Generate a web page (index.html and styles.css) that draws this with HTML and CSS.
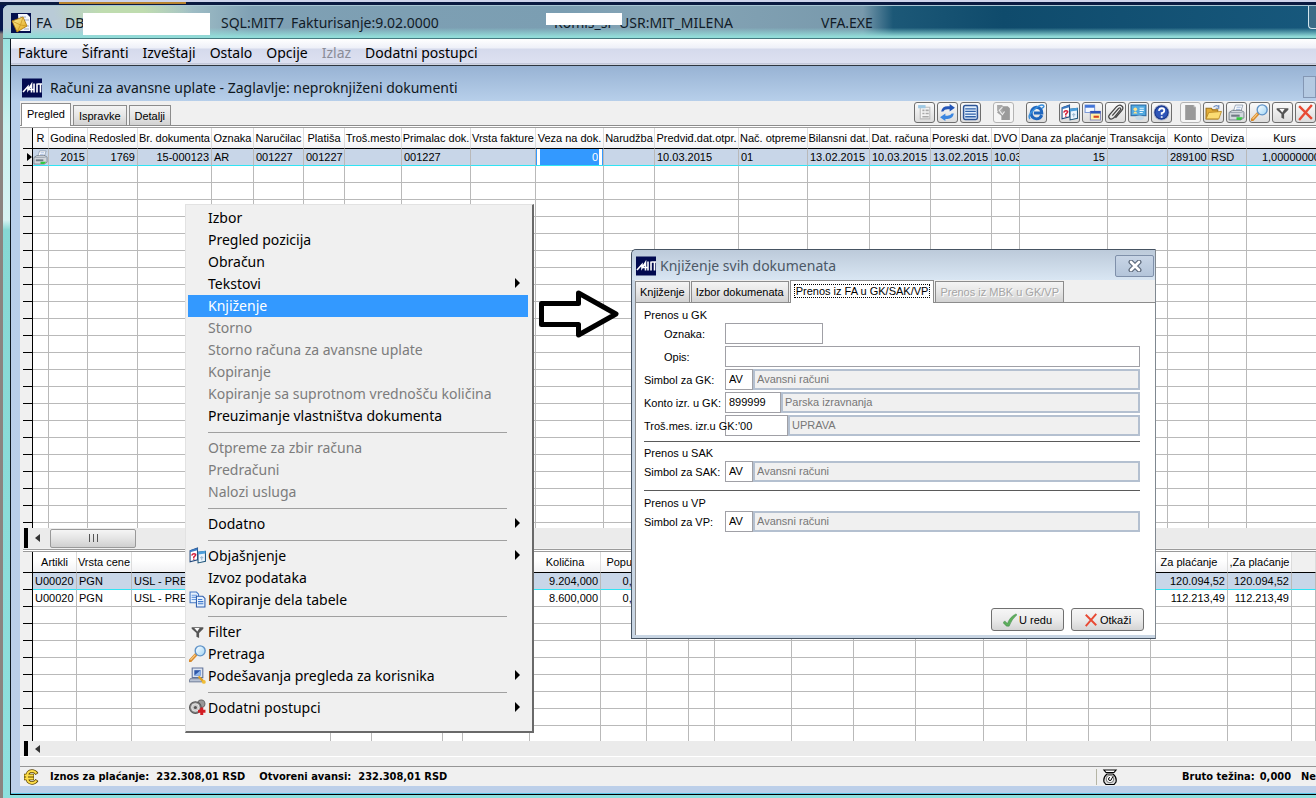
FILE: index.html
```html
<!DOCTYPE html>
<html lang="sr-Latn">
<head>
<meta charset="utf-8">
<title>Fakturisanje</title>
<link rel="stylesheet" href="styles.css">
</head>
<body>
<svg class="defs" aria-hidden="true">
  <defs>
    <linearGradient id="gold" x1="0" y1="0" x2="1" y2="1"><stop offset="0" stop-color="#fff3a0"/><stop offset="1" stop-color="#e0a010"/></linearGradient>
    <linearGradient id="glass" x1="0" y1="0" x2="1" y2="1"><stop offset="0" stop-color="#fff"/><stop offset="1" stop-color="#9fd4f5"/></linearGradient>
    <symbol id="i-mit" viewBox="0 0 20 19"><rect width="20" height="19" fill="#020a50"/><path d="M1 13.500 6 8v3.500L9.500 6v8M6 11h6M12 5v9M15 5v9M15.500 5.500H20M18.500 5.500V14" fill="none" stroke="#fff" stroke-width="1.600"/></symbol>
    <symbol id="i-app" viewBox="0 0 20 20"><rect width="20" height="20" fill="#04104e"/><path d="M7 1h9l3 3v14H8z" fill="#f4f6fb"/><path d="M9 4h6M10 7h8M15 13h3M13 16h5" stroke="#9aa7c4"/><path d="M1 8 12 4l4 9-10 6z" fill="url(#gold)" stroke="#a87408" stroke-width=".8"/><path d="m1 8 8.500 4L12 4M6 19l3.500-7 6.500 1" fill="none" stroke="#c99722" stroke-width=".8"/></symbol>
    <symbol id="i-print" viewBox="0 0 16 16"><path d="M5 7 7 1h7l-2 6z" fill="#fff" stroke="#7b8ca2" stroke-width=".7"/><path d="M8 3h4M7.500 5h4" stroke="#8aa6d6" stroke-width=".8"/><path d="m1 8 3-2h9l2 2v5l-3 2H1z" fill="#d3d8de" stroke="#5f6a76" stroke-width=".7"/><path d="M1 8h11l3-1" fill="none" stroke="#8b96a2" stroke-width=".7"/><path d="M3 10h8v2H3z" fill="#707a84"/><path d="M8 12.500h6L12 15H8z" fill="#35c840"/></symbol>
    <symbol id="i-lens" viewBox="0 0 16 16"><path d="m1 15 5.500-6" stroke="#d98a2b" stroke-width="3" stroke-linecap="round"/><path d="m1.500 14 4.500-5" stroke="#f9cf8a"/><circle cx="10.500" cy="5.500" r="4.700" fill="url(#glass)" stroke="#5f93c8" stroke-width="1.300"/></symbol>
    <symbol id="i-filter" viewBox="0 0 16 16"><path d="M2.500 4h11v1.500L9.500 9.500V14l-2.500-1V9.500L2.500 5.500z" fill="#555"/><path d="M5 4.800h5L7.800 8z" fill="#fafafa"/></symbol>
    <symbol id="i-help-docs" viewBox="0 0 16 16"><path d="M1 3.500 8 1v11l-7 2z" fill="#fff" stroke="#22487c"/><path d="M1 3 8 1v2L1 5z" fill="#3d7cc4"/><path d="m8.500 5 7-1v9.500l-7 1.500z" fill="#eaf5fd" stroke="#22587c"/><path d="m8.500 4.500 7-1v2.500l-7 1z" fill="#4c9fdc"/><path d="M2.500 8q1-2 3-1.500t-1 3v1M4.500 11v1" fill="none" stroke="#d21d3a" stroke-width="1.400"/><path d="M10.500 10h3M12 8.500v4" stroke="#9fbdd6"/></symbol>
    <symbol id="i-copy" viewBox="0 0 16 16"><path d="M1 1h6l2 2v8H1z" fill="#e6f1fd" stroke="#4377c4"/><path d="M2.500 4h5M2.500 6h5M2.500 8h5" stroke="#6b9be0"/><path d="M7 5h6l2 2v8H7z" fill="#e6f1fd" stroke="#315fae"/><path d="M8.500 8h4M8.500 10h5M8.500 12h5" stroke="#3f78cc"/></symbol>
    <symbol id="i-pc" viewBox="0 0 16 16"><path d="M3 1h10v9H3z" fill="#dce5f2" stroke="#617399"/><path d="M5 3h6v5H5z" fill="#2e57a8"/><path d="m5 8 6-5v5z" fill="#8fb6ec"/><path d="M1 11h11l1 3H0z" fill="#b9c3d4" stroke="#65738e" stroke-width=".8"/><path d="m9 9 5 5" stroke="#e0a020" stroke-width="2"/><circle cx="14" cy="14" r="1.800" fill="#f0bd37"/></symbol>
    <symbol id="i-gears" viewBox="0 0 16 16"><circle cx="11.500" cy="4.500" r="3.500" fill="#999" stroke="#666"/><circle cx="6" cy="8" r="5.500" fill="#8d8d8d" stroke="#555"/><circle cx="6" cy="8" r="3.600" fill="#c9c9c9" stroke="#eee" stroke-width=".8"/><circle cx="6" cy="8" r="1.500" fill="#555"/><path d="M12 8v7M8.500 11.500h7" stroke="#d31e24" stroke-width="2.800"/></symbol>
    <symbol id="i-form" viewBox="0 0 16 16"><path d="M4 3h9v11H4z" fill="#f4f4f4" stroke="#bbb"/><path d="M2 1h7v3H2z" fill="#9fc9e4"/><path d="M6 6h2M9 6h3M6 9h2M9 9h3M6 12h6" stroke="#aaa" stroke-width="1.500"/></symbol>
    <symbol id="i-refresh" viewBox="0 0 16 16"><path d="M2 7q1-5 6-5h2V0l5 3.500L10 7V5H8Q5 5 4 7z" fill="#2456b8"/><path d="M14 9q-1 5-6 5H6v2l-5-3.500L6 9v2h2q3 0 4-2z" fill="#3b86e0"/></symbol>
    <symbol id="i-list" viewBox="0 0 16 16"><rect x="1.500" y="1.500" width="13" height="13" rx="1.500" fill="#e2effc" stroke="#2d5596" stroke-width="1.400"/><path d="M3 4.500h10M3 7h10M3 9.500h10M3 12h10" stroke="#2f61a8" stroke-width="1.200"/></symbol>
    <symbol id="i-gray-doc" viewBox="0 0 16 16"><path d="M6 2h6l2 2v11H6V11L2 8z" fill="#9a9a9a"/><path d="M2 1h5v5l2 2-4 2-3-4z" fill="#a9a9a9"/><path d="m7 3-3 3 3 4 2-3" fill="none" stroke="#eee"/></symbol>
    <symbol id="i-ie" viewBox="0 0 16 16"><path d="M13 10.500Q11.500 14 8 14 3 13.500 3 8.500 3.500 3.500 8 3q5 .5 5 5.500H5.500" fill="none" stroke="#1f66be" stroke-width="2.800"/><path d="M2 14Q-1 11 6 5t9-3q0 1-2 2" fill="none" stroke="#3c91de" stroke-width="1.400"/></symbol>
    <symbol id="i-windows" viewBox="0 0 16 16"><path d="M1 1h9v7H1z" fill="#f3f8ff" stroke="#7d9bd8"/><path d="M1 1h9v2.500H1z" fill="#3f73d8"/><path d="M6 7h9.500v8H6z" fill="#fff1a8" stroke="#8a8dbb"/><path d="M6 6.500h9.500V9H6z" fill="#2c51b8"/><path d="M9 11h5v2H9z" fill="#d8421c"/></symbol>
    <symbol id="i-clip" viewBox="0 0 16 16"><path d="m5 11 6-7q2-1 2 1l-6.500 8q-3 2.500-4.500 0-1-1 .5-3L9 2.500q3-2.500 5-.5 2 1.500 0 4L8 13" fill="none" stroke="#444" stroke-width="1.200"/></symbol>
    <symbol id="i-card" viewBox="0 0 16 16"><rect x="1" y="1" width="14" height="10" fill="#50a9e0" stroke="#2869a4"/><circle cx="5" cy="5" r="1.700" fill="#ffe38a"/><path d="M3 9q2-4 4 0z" fill="#ffe38a"/><path d="M9 4h4M9 6h4M9 8h3" stroke="#e8f6ff"/><ellipse cx="9" cy="13" rx="4" ry="2.200" fill="#c4d9e8"/></symbol>
    <symbol id="i-question" viewBox="0 0 16 16"><circle cx="8" cy="8" r="7" fill="#2e55b8" stroke="#aab4cc"/><circle cx="8" cy="8" r="6.200" fill="none" stroke="#1a3688"/><path d="M5.500 6.500Q6 4 8.300 4t2.300 2T8.200 8.500V10M8.200 11.500V13" fill="none" stroke="#fff" stroke-width="1.700"/></symbol>
    <symbol id="i-blank" viewBox="0 0 16 16"><path d="M3 1h8l2 2v12H3z" fill="#999"/><path d="m11 1 2 2h-2z" fill="#ccc"/></symbol>
    <symbol id="i-folder" viewBox="0 0 16 16"><path d="M1 4h5l1 1.500h5V14H1z" fill="#e3ac37" stroke="#9d721b"/><path d="m3.500 8 12-1-2.500 7H1z" fill="#fbdc72" stroke="#b78622" stroke-width=".8"/><path d="M8 3q3-3 5 0m0-2v3h-3" fill="none" stroke="#6b8cc0"/></symbol>
    <symbol id="i-x" viewBox="0 0 16 16"><path d="m2 2 12 12M14 1 2 15" fill="none" stroke="#e84a34" stroke-width="2.200"/></symbol>
    <symbol id="i-check" viewBox="0 0 16 16"><path d="m0 11 2-2 3 3Q8 4 15 1l1 1Q10 7 7 15H4z" fill="#5dae5c" stroke="#2d7d36" stroke-width=".5"/></symbol>
    <symbol id="i-euro" viewBox="0 0 16 16"><path d="M14 5Q12 2 9 2 4 2 4 8t5 6q3 0 5-3M1 6.500h10M1 9.500h10" fill="none" stroke="#5c4400" stroke-width="3.400"/><path d="M13.500 4.500Q12 2 9 2 4 2 4 8t5 6q3 0 4.500-2.500M1.500 6.500h9M1.500 9.500h9" fill="none" stroke="#ffdf49" stroke-width="1.800"/></symbol>
    <symbol id="i-scale" viewBox="0 0 16 16"><path d="M2 1h12l-2 2.500H4z" fill="#fff" stroke="#000" stroke-width="1.200"/><path d="M5 5h6q4 3 3 8l-2 2.500H4L2 13q-1-5 3-8z" fill="#ddd" stroke="#000" stroke-width="1.200"/><circle cx="8" cy="10" r="3.800" fill="#fff" stroke="#555" stroke-width=".8"/><path d="M8 8.500A1.500 1.500 0 1 0 9.500 10L11 7.500" fill="none" stroke="#000"/></symbol>
  </defs>
</svg>

<div class="desktop">
  <main class="window">
    <header class="titlebar">
      <svg class="ico-20"><use href="#i-app"/></svg>
      <span class="app">FA</span><span class="db">DB</span><span class="db-tail">2</span>
      <span>SQL:MIT7</span><span>Fakturisanje:9.02.0000</span>
      <span class="firm">Komis_sr</span><span>USR:MIT_MILENA</span><span>VFA.EXE</span>
      <i class="caption-box"></i>
    </header>

    <div class="client">
      <nav class="menubar">
        <button>Fakture</button><button>Šifranti</button><button>Izveštaji</button><button>Ostalo</button><button>Opcije</button><button disabled>Izlaz</button><button>Dodatni postupci</button>
      </nav>

      <section class="child">
        <h1 class="child-title"><svg class="ico-20"><use href="#i-mit"/></svg><span>Računi za avansne uplate - Zaglavlje: neproknjiženi dokumenti</span><i class="child-box"></i></h1>

        <div class="panel">
          <div class="bar">
            <div class="tabs">
              <button class="tab active">Pregled</button><button class="tab">Ispravke</button><button class="tab">Detalji</button>
            </div>
            <div class="tools">
              <div class="tool-group">
                <button class="tool" aria-label="Obrazac"><svg><use href="#i-form"/></svg></button>
                <button class="tool" aria-label="Osveži"><svg><use href="#i-refresh"/></svg></button>
                <button class="tool" aria-label="Lista"><svg><use href="#i-list"/></svg></button>
              </div>
              <div class="tool-group"><button class="tool flat" aria-label="Prenos"><svg><use href="#i-gray-doc"/></svg></button></div>
              <div class="tool-group"><button class="tool" aria-label="Internet"><svg><use href="#i-ie"/></svg></button></div>
              <div class="tool-group">
                <button class="tool" aria-label="Objašnjenje"><svg><use href="#i-help-docs"/></svg></button>
                <button class="tool" aria-label="Prozori"><svg><use href="#i-windows"/></svg></button>
                <button class="tool" aria-label="Prilog"><svg><use href="#i-clip"/></svg></button>
                <button class="tool" aria-label="Kartica"><svg><use href="#i-card"/></svg></button>
                <button class="tool" aria-label="Pomoć"><svg><use href="#i-question"/></svg></button>
              </div>
              <div class="tool-group last">
                <button class="tool flat" aria-label="Novi"><svg><use href="#i-blank"/></svg></button>
                <button class="tool" aria-label="Otvori"><svg><use href="#i-folder"/></svg></button>
                <button class="tool" aria-label="Štampa"><svg><use href="#i-print"/></svg></button>
                <button class="tool" aria-label="Pretraga"><svg><use href="#i-lens"/></svg></button>
                <button class="tool" aria-label="Filter"><svg><use href="#i-filter"/></svg></button>
                <button class="tool" aria-label="Brisanje"><svg><use href="#i-x"/></svg></button>
              </div>
            </div>
          </div>

          <div class="grid-wrap upper">
            <table class="grid wide">
              <colgroup>
                <col style="width:10px"><col style="width:16px"><col style="width:39px"><col style="width:50px"><col style="width:74px"><col style="width:42px"><col style="width:50px"><col style="width:41px"><col style="width:57px"><col style="width:69px"><col style="width:65px"><col style="width:68px"><col style="width:51px"><col style="width:84px"><col style="width:69px"><col style="width:62px"><col style="width:61px"><col style="width:61px"><col style="width:28px"><col style="width:88px"><col style="width:60px"><col style="width:41px"><col style="width:38px"><col style="width:76px"><col>
              </colgroup>
              <thead><tr><th class="mark"></th><th>R</th><th>Godina</th><th>Redosled</th><th>Br. dokumenta</th><th>Oznaka</th><th>Naručilac</th><th>Platiša</th><th>Troš.mesto</th><th>Primalac dok.</th><th>Vrsta fakture</th><th>Veza na dok.</th><th>Narudžba</th><th>Predviđ.dat.otpr.</th><th>Nač. otpreme</th><th>Bilansni dat.</th><th>Dat. računa</th><th>Poreski dat.</th><th>DVO</th><th>Dana za plaćanje</th><th>Transakcija</th><th>Konto</th><th>Deviza</th><th>Kurs</th><th></th></tr></thead>
              <tbody>
                <tr class="selected"><td class="mark"><svg class="row-arrow" viewBox="0 0 5 8"><path d="M0 0 5 4 0 8z"/></svg></td><td class="icon-cell"><svg><use href="#i-print"/></svg></td><td class="num">2015</td><td class="num">1769</td><td class="num">15-000123</td><td>AR</td><td>001227</td><td>001227</td><td></td><td>001227</td><td></td><td class="edit"><input value="0" aria-label="Veza na dok."></td><td></td><td>10.03.2015</td><td>01</td><td>13.02.2015</td><td>10.03.2015</td><td>13.02.2015</td><td>10.03.2015</td><td class="num">15</td><td></td><td>289100</td><td>RSD</td><td class="num">1,00000000</td><td></td></tr>
                <tr class="filler"><td class="mark"></td><td></td><td></td><td></td><td></td><td></td><td></td><td></td><td></td><td></td><td></td><td></td><td></td><td></td><td></td><td></td><td></td><td></td><td></td><td></td><td></td><td></td><td></td><td></td><td></td></tr>
              </tbody>
            </table>
          </div>
          <div class="scroll"><i class="split"></i><svg class="scroll-arrow" viewBox="0 0 5 8"><path d="M5 0 0 4l5 4z"/></svg><i class="thumb"></i></div>
          <div class="splitter"></div>
          <div class="grid-wrap lower">
            <table class="grid">
              <colgroup>
                <col style="width:10px"><col style="width:44px"><col style="width:55px"><col style="width:199px"><col style="width:41px"><col style="width:71px"><col style="width:20px"><col style="width:67px"><col style="width:71px"><col style="width:46px"><col style="width:42px"><col style="width:26px"><col style="width:77px"><col style="width:62px"><col style="width:62px"><col style="width:68px"><col style="width:43px"><col style="width:62px"><col style="width:62px"><col style="width:77px"><col style="width:64px"><col>
              </colgroup>
              <thead><tr><th class="mark"></th><th>Artikli</th><th>Vrsta cene</th><th></th><th></th><th></th><th></th><th></th><th>Količina</th><th>Popust</th><th></th><th></th><th></th><th></th><th></th><th></th><th></th><th></th><th></th><th>Za plaćanje</th><th>,Za plaćanje</th><th class="rest"></th></tr></thead>
              <tbody>
                <tr class="selected"><td class="mark"></td><td>U00020</td><td>PGN</td><td>USL - PREVOZ</td><td></td><td></td><td></td><td></td><td class="num">9.204,000</td><td class="num">0,00</td><td></td><td></td><td></td><td></td><td></td><td></td><td></td><td></td><td></td><td class="num">120.094,52</td><td class="num">120.094,52</td><td></td></tr>
                <tr><td class="mark"></td><td>U00020</td><td>PGN</td><td>USL - PREVOZ</td><td></td><td></td><td></td><td></td><td class="num">8.600,000</td><td class="num">0,00</td><td></td><td></td><td></td><td></td><td></td><td></td><td></td><td></td><td></td><td class="num">112.213,49</td><td class="num">112.213,49</td><td></td></tr>
                <tr class="filler"><td class="mark"></td><td></td><td></td><td></td><td></td><td></td><td></td><td></td><td></td><td></td><td></td><td></td><td></td><td></td><td></td><td></td><td></td><td></td><td></td><td></td><td></td><td></td></tr>
              </tbody>
            </table>
          </div>
          <div class="scroll thin"><i class="split"></i><svg class="scroll-arrow" viewBox="0 0 5 8"><path d="M5 0 0 4l5 4z"/></svg></div>
          <footer class="status">
            <svg class="ico-16"><use href="#i-euro"/></svg>
            <span class="pair"><b>Iznos za plaćanje:</b><b>232.308,01 RSD</b></span>
            <span class="pair"><b>Otvoreni avansi:</b><b>232.308,01 RSD</b></span>
            <span class="status-right"><svg class="ico-16"><use href="#i-scale"/></svg><span class="pair"><b>Bruto težina:</b><b>0,000</b></span><b>Ne</b></span>
          </footer>
        </div>
      </section>
    </div>
  </main>

  <div class="menu" role="menu">
    <button>Izbor</button>
    <button>Pregled pozicija</button>
    <button>Obračun</button>
    <button class="sub">Tekstovi</button>
    <button class="hot">Knjiženje</button>
    <button disabled>Storno</button>
    <button disabled>Storno računa za avansne uplate</button>
    <button disabled>Kopiranje</button>
    <button disabled>Kopiranje sa suprotnom vrednošču količina</button>
    <button>Preuzimanje vlastništva dokumenta</button>
    <hr>
    <button disabled>Otpreme za zbir računa</button>
    <button disabled>Predračuni</button>
    <button disabled>Nalozi usluga</button>
    <hr>
    <button class="sub">Dodatno</button>
    <hr>
    <button class="sub"><svg><use href="#i-help-docs"/></svg>Objašnjenje</button>
    <button>Izvoz podataka</button>
    <button><svg><use href="#i-copy"/></svg>Kopiranje dela tabele</button>
    <hr>
    <button><svg><use href="#i-filter"/></svg>Filter</button>
    <button><svg><use href="#i-lens"/></svg>Pretraga</button>
    <button class="sub"><svg><use href="#i-pc"/></svg>Podešavanja pregleda za korisnika</button>
    <hr>
    <button class="sub"><svg><use href="#i-gears"/></svg>Dodatni postupci</button>
  </div>

  <svg class="big-arrow" viewBox="0 0 84 52"><path d="M5.500 15.500h37V5L80 26 42.500 47V36.500h-37z"/></svg>

  <section class="dialog" role="dialog" aria-labelledby="dlg-title">
    <header class="dialog-title"><svg class="ico-20"><use href="#i-mit"/></svg><h2 id="dlg-title">Knjiženje svih dokumenata</h2><button class="close" aria-label="Zatvori"><svg viewBox="0 0 14 12"><path d="m3 2 8 8M11 2 3 10" stroke="#5d6a7c" stroke-width="5" stroke-linecap="round"/><path d="m3 2 8 8M11 2 3 10" stroke="#fff" stroke-width="2.600" stroke-linecap="round"/></svg></button></header>
    <div class="dialog-tabs">
      <button class="tab">Knjiženje</button><button class="tab">Izbor dokumenata</button><button class="tab active"><span>Prenos iz FA u GK/SAK/VP</span></button><button class="tab" disabled>Prenos iz MBK u GK/VP</button>
    </div>
    <form class="dialog-body">
      <h3>Prenos u GK</h3>
      <div class="row inset"><label for="oz">Oznaka:</label><input id="oz" class="w-mark"></div>
      <div class="row inset"><label for="op">Opis:</label><input id="op" class="grow"></div>
      <div class="row"><label for="sgk">Simbol za GK:</label><input id="sgk" class="w-2" value="AV"><input class="grow ro" aria-label="Naziv simbola za GK" value="Avansni računi" disabled></div>
      <div class="row"><label for="kgk">Konto izr. u GK:</label><input id="kgk" class="w-6" value="899999"><input class="grow ro" aria-label="Naziv konta" value="Parska izravnanja" disabled></div>
      <div class="row"><label for="tgk" class="over">Troš.mes. izr.u GK:</label><input id="tgk" class="w-7" value="'00"><input class="grow ro" aria-label="Naziv troškovnog mesta" value="UPRAVA" disabled></div>
      <h3 class="ruled tight">Prenos u SAK</h3>
      <div class="row"><label for="ssak">Simbol za SAK:</label><input id="ssak" class="w-2" value="AV"><input class="grow ro" aria-label="Naziv simbola za SAK" value="Avansni računi" disabled></div>
      <h3 class="ruled">Prenos u VP</h3>
      <div class="row"><label for="svp">Simbol za VP:</label><input id="svp" class="w-2" value="AV"><input class="grow ro" aria-label="Naziv simbola za VP" value="Avansni računi" disabled></div>
      <div class="actions"><button type="button"><svg><use href="#i-check"/></svg>U redu</button><button type="button"><svg><use href="#i-x"/></svg>Otkaži</button></div>
    </form>
  </section>
</div>
</body>
</html>
```

FILE: styles.css
```css
* { box-sizing: border-box; }
body { margin: 0; font: 11px/16px "Liberation Sans", Arial, sans-serif; color: #000; }
button, input { font: inherit; color: inherit; margin: 0; border-radius: 0; }
button { padding: 0; border: 0; background: none; }
h1, h2, h3 { margin: 0; font: inherit; }
svg { display: block; flex: none; }
.defs { position: absolute; width: 0; height: 0; }
.ico-20 { width: 20px; height: 20px; }
.ico-16 { width: 16px; height: 16px; }

.desktop {
  position: relative; height: 100vh; overflow: hidden; padding: 5px 0 0 3px;
  background:
    linear-gradient(#b8832e, #b8832e) 59px 2px / 127px 2px no-repeat,
    linear-gradient(#cdd3ea 0 2px, #0a1a40 2px 5px, transparent 5px),
    linear-gradient(#06164d 0 30px, #8b8480 34px 100%);
}
.window {
  display: flex; flex-direction: column; height: 100%; padding: 0 0 3px 7px;
  border-top-left-radius: 6px;
  background: linear-gradient(#c3dce4, #9de3df 36px, #c8f0ee 120px, #d8f3f3 215px, #86d8d4 225px, #8ee0de);
}

.titlebar {
  position: relative; height: 34px; margin-left: -7px; padding: 2px 0 0 8px;
  display: grid; grid-template-columns: 25px 29px 130px 26px 70px 263px 65px 202px 1fr; align-items: center;
  font: 14px/20px "Noto Sans", "Open Sans", sans-serif; white-space: nowrap; color: #111c28;
  border-top-left-radius: 6px; border-top: 1px solid #a9c6d4; border-bottom: 1px solid #457a80;
  background:
    linear-gradient(transparent 68%, #92dcd8 96%),
    radial-gradient(ellipse 70px 22px at 120px 6px, #bfdcaf 30%, transparent),
    linear-gradient(90deg, #b9cbd7 0 60px, #a3c1c8 180px, #7fa0b4 250px, #7b9eb2 560px, #86a5b6 650px, #7899ac 860px, #1c5877 890px, #0f4b6c 1000px, #17587c);
}
.titlebar .app { grid-column: 2; }
.titlebar .db { position: relative; grid-column: 3; }
.titlebar .db::after { content: ""; position: absolute; left: 18px; top: 0; width: 127px; height: 22px; background: #fff; z-index: 1; }
.titlebar .db-tail { grid-column: 4; margin-left: -10px; }
.titlebar .firm { position: relative; }
.titlebar .firm::before { content: ""; position: absolute; left: -8px; top: 0; width: 76px; height: 12px; background: #fff; }
.titlebar .caption-box { position: absolute; right: 0; top: 0; width: 8px; height: 23px; border: 1px solid #d4e6ee; border-width: 0 0 1px 1px; border-radius: 0 0 0 4px; background: #3c6c87; }

.client { flex: 1; min-height: 0; display: flex; flex-direction: column; border-left: 1px solid #101820; border-bottom: 1px solid #000; }
.menubar {
  height: 27px; display: flex; gap: 14px; padding: 2px 7px 0; align-items: center;
  font: 14px/20px "Noto Sans", "Open Sans", sans-serif;
  background: linear-gradient(#fff, #eef0f8 9px, #d5daec 10px, #dde1f1 24px, #a8afc4 25px, #f6f8fc 26px);
  border-bottom: 1px solid #2e3640;
}
.menubar button:disabled { color: #8a8c98; }

.child { flex: 1; min-height: 0; display: flex; flex-direction: column; padding: 0 0 7px 9px; background: linear-gradient(#98b3d4, #b7cfea 35px, #bccfe9); border-bottom: 1px solid #59c8e8; }
.child-title { position: relative; height: 35px; display: flex; align-items: center; gap: 8px; padding: 9px 0 0 2px; font: 14px/20px "Noto Sans", "Open Sans", sans-serif; color: #101820; }
.child-box { position: absolute; right: 0; top: 10px; width: 13px; height: 22px; border: 1px solid #8497b4; background: #b5cae2; }
.panel { flex: 1; min-height: 0; display: flex; flex-direction: column; background: #f0f0f0; padding-left: 3px; }

.bar { height: 27px; margin-left: -3px; display: flex; justify-content: space-between; border-bottom: 1px solid #a0a0a0; box-shadow: inset 0 -1px #fff, inset 0 -2px #8c8c8c; }
.tabs { display: flex; align-items: flex-end; gap: 2px; padding: 0 0 2px 1px; }
.tab { height: 20px; padding: 0 5px; border: 1px solid #8c8c8c; border-bottom: 0; background: linear-gradient(#f4f4f4, #e6e6e6 50%, #d2d2d2); white-space: nowrap; }
.tab.active { height: 23px; background: #fff; margin-bottom: -1px; padding-bottom: 2px; }
.tools { display: flex; gap: 12px; padding-top: 1px; }
.tool-group { display: flex; gap: 2px; }
.tool-group.last { margin-left: -4px; }
.tool { width: 21px; height: 21px; border: 1px solid #6e6e6e; border-radius: 3px; background: linear-gradient(#fafafa, #dcdcdc); display: grid; place-items: center; }
.tool svg { width: 17px; height: 17px; }
.tool.flat { border-color: #b4b4b4; background: #f6f6f6; }

.grid-wrap { min-height: 0; overflow: hidden; background: #fff; }
.upper { flex: 400 1 0; }
.lower { flex: 189 1 0; }
.grid { width: 100%; height: 100%; table-layout: fixed; border-collapse: separate; border-spacing: 0; }
.grid.wide { min-width: 1300px; }
.grid th, .grid td { padding: 0 2px; height: 17px; overflow: hidden; white-space: nowrap; text-align: left; border-right: 1px solid #b9b9b9; border-bottom: 1px solid #b9b9b9; }
.grid th { height: 21px; font-weight: normal; text-align: center; border-right-color: #dcdcdc; border-bottom: 1px solid #000; background: linear-gradient(#fff 40%, #f2f2f4); padding: 0; }
.grid th.rest { background: #f0f0f0; }
.grid .mark { background: #f0f0f0; border-right: 1px solid #000; border-bottom-color: #000; padding: 0; }
.grid .num { text-align: right; }
.grid .selected td { background: #c8d6e8; border-bottom-color: #30e4f4; }
.grid .selected td.mark { background: #f0f0f0; border-bottom-color: #000; }
.grid .filler td { height: auto; border-bottom: 0; background: repeating-linear-gradient(#fff 0 16px, #b9b9b9 16px 17px); }
.grid .filler td.mark { background: repeating-linear-gradient(#f0f0f0 0 16px, #000 16px 17px); }
.row-arrow { width: 5px; height: 8px; margin-left: 4px; }
.grid td.icon-cell { padding: 0; }
.icon-cell svg { width: 15px; height: 15px; }
.grid td.edit { padding: 0 1px; }
.edit input { display: block; width: 100%; height: 16px; padding: 0 1px; border: solid #fff; border-width: 0 3px; outline: 1px solid #3399ff; background: #3399ff; background-clip: padding-box; color: #fff; text-align: right; }

.scroll { height: 20px; display: flex; align-items: center; padding-left: 1px; background: #ebebeb; }
.split { width: 4px; height: 20px; background: #000; margin-right: 7px; }
.scroll-arrow { width: 5px; height: 8px; fill: #333; margin-right: 10px; }
.thumb { width: 86px; height: 19px; border: 1px solid #999; border-radius: 2px; background: linear-gradient(90deg, #555 0 1px, transparent 1px 4px, #555 4px 5px, transparent 5px 8px, #555 8px 9px) center / 9px 8px no-repeat, linear-gradient(#f5f5f5, #e4e4e4 50%, #cfcfcf); }
.splitter { height: 4px; background: linear-gradient(#f0f0f0 1px, #9a9a9a 1px 2px, #fff 2px 3px, #9a9a9a 3px); }
.scroll.thin { height: 15px; }
.thin .split { height: 15px; }

.status {
  height: 30px; margin-left: -3px; padding: 11px 0 0 3px; display: flex; align-items: center; gap: 14px; overflow: hidden; white-space: nowrap;
  font: 11px/16px "DejaVu Sans Condensed", "Open Sans", sans-serif;
  background: linear-gradient(#fff 0 1px, #f0f0f0 1px 10px, #969696 10px 11px, #f0f0f0 11px);
}
.status > .ico-16 { margin-right: -3px; }
.pair { display: flex; gap: 7px; }
.status-right { width: 220px; margin-left: auto; display: flex; align-items: center; gap: 10px; padding-left: 5px; border-left: 1px solid #b5b5a5; }
.status-right .pair { gap: 5px; }
.status-right .ico-16 { margin-right: 54px; }

.menu { position: absolute; left: 185px; top: 204px; width: 349px; padding: 2px 4px 12px 2px; background: #f0f0f0; border: 1px solid #e2e2e2; border-right: 2px solid #696969; border-bottom: 2px solid #696969; font: 14px/22px "Noto Sans", "Open Sans", sans-serif; }
.menu button { position: relative; display: block; width: 100%; height: 22px; padding-left: 20px; text-align: left; white-space: nowrap; }
.menu button:disabled { color: #7c7c7c; }
.menu .hot { background: #3399ff; color: #fff; }
.menu svg { position: absolute; left: 1px; top: 2px; width: 17px; height: 17px; }
.menu hr { height: 1px; margin: 5px 21px 4px 20px; border: 0; background: #a0a0a0; }
.menu .sub::after { content: ""; position: absolute; right: 8px; top: 5px; border: 5px solid transparent; border-left-color: #000; border-right: 0; }
.big-arrow { position: absolute; left: 536px; top: 288px; width: 84px; height: 52px; fill: #fff; stroke: #000; stroke-width: 5; stroke-linejoin: round; }

.dialog { position: absolute; left: 631px; top: 249px; width: 525px; height: 390px; display: flex; flex-direction: column; padding: 0 0 3px 3px; border: 1px solid #465362; border-right-color: #808890; border-top-left-radius: 5px; background: #c8d5e3; }
.dialog-title { height: 30px; margin-left: -3px; padding: 1px 1px 0 4px; display: flex; align-items: center; gap: 4px; border-top-left-radius: 5px; background: linear-gradient(#bccada, #d9e6f3); }
.dialog-title h2 { flex: 1; font: 14px/20px "Noto Sans", "Open Sans", sans-serif; color: #4c5866; }
.close { width: 39px; height: 22px; border: 1px solid #7f90aa; border-radius: 2px; background: linear-gradient(#c8d5e6, #b4c5da); display: grid; place-items: center; }
.close svg { width: 14px; height: 12px; }
.dialog-tabs { height: 22px; display: flex; align-items: flex-end; gap: 1px; background: #f0f0f0; }
.dialog-tabs .tab { height: 21px; padding: 0 4px; }
.dialog-tabs .tab.active { position: relative; height: 23px; padding: 0 3px 3px; }
.dialog-tabs .tab.active span { display: block; line-height: 14px; padding: 0 2px; outline: 1px dotted #000; outline-offset: -1px; }
.dialog-tabs .tab:disabled { color: #a5a5a5; text-shadow: 1px 1px #fff; }
.dialog-body { flex: 1; display: flex; flex-direction: column; padding: 4px 15px 4px 8px; background: #fff; border: 1px solid #8c8c8c; border-width: 1px 0 0 1px; }
.dialog-body h3 { line-height: 16px; }
.row { display: flex; align-items: center; margin-bottom: 2px; }
.row label { width: 81px; white-space: nowrap; }
.row.inset label { padding-left: 20px; }
.row label.over { position: relative; z-index: 1; }
.row input { height: 21px; min-width: 0; padding: 0 3px 2px; border: 1px solid #a0a0a6; background: #fff; }
.row .grow { flex: 1; }
.row .ro { border: 2px solid #b4c0d0; background: #f0f0f0; color: #777; padding-left: 2px; }
.w-mark { width: 98px; }
.w-2 { width: 28px; }
.w-6 { width: 56px; }
.row .w-7 { width: 63px; padding-left: 12px; padding-bottom: 0; }
.dialog-body .ruled { margin-top: 6px; padding-top: 4px; border-top: 1px solid #5a5a5a; }
.dialog-body .tight { margin-top: 3px; padding-top: 3px; }
.actions { margin-top: auto; margin-right: -4px; display: flex; justify-content: flex-end; gap: 7px; }
.actions button { width: 73px; height: 23px; display: flex; align-items: center; justify-content: center; gap: 2px; border: 1px solid #707070; border-radius: 3px; background: linear-gradient(#f6f6f6, #ebebeb 50%, #d4d4d4); }
.actions svg { width: 14px; height: 14px; }
```
